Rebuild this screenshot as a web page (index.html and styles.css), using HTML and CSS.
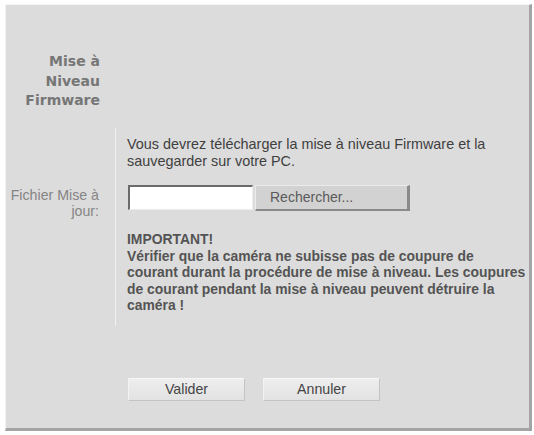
FILE: index.html
```html
<!DOCTYPE html>
<html lang="fr">
<head>
<meta charset="utf-8">
<title>Mise à Niveau Firmware</title>
<link rel="stylesheet" href="styles.css">
</head>
<body>
<div class="panel">
  <div class="header">
    <h1 class="title">Mise à<br>Niveau<br>Firmware</h1>
  </div>
  <div class="form">
    <div class="labels">
      <div class="label">Fichier Mise à<br>jour:</div>
    </div>
    <div class="content">
      <p class="intro">Vous devrez télécharger la mise à niveau Firmware et la<br>sauvegarder sur votre PC.</p>
      <div class="file-row">
        <span class="file-input"></span>
        <span class="browse">Rechercher...</span>
      </div>
      <p class="warning">IMPORTANT!<br>Vérifier que la caméra ne subisse pas de coupure de<br>courant durant la procédure de mise à niveau. Les coupures<br>de courant pendant la mise à niveau peuvent détruire la<br>caméra !</p>
    </div>
  </div>
  <div class="actions">
    <button class="btn">Valider</button>
    <button class="btn">Annuler</button>
  </div>
</div>
</body>
</html>
```

FILE: styles.css
```css
html, body {
  margin: 0;
  padding: 0;
  background: #ffffff;
}
body {
  font-family: "Liberation Sans", Arial, sans-serif;
}
.panel {
  margin: 4px 0 0 5px;
  width: 523px;
  height: 423px;
  box-sizing: content-box;
  background: #dcdcdc;
  border-top: 1px solid #f4f4f4;
  border-left: 1px solid #f2f2f2;
  border-right: 3px solid #a4a4a4;
  border-bottom: 3px solid #a4a4a4;
  display: flex;
  flex-direction: column;
  overflow: hidden;
}
.header {
  width: 94px;
  padding-top: 47px;
  height: 76px;
}
.title {
  margin: 0;
  text-align: right;
  font-family: "DejaVu Sans", Verdana, sans-serif;
  font-weight: bold;
  font-size: 14px;
  line-height: 19.5px;
  color: #767676;
}
.form {
  display: flex;
}
.labels {
  width: 93px;
  padding-right: 16px;
  padding-top: 59px;
}
.label {
  text-align: right;
  font-size: 14.2px;
  line-height: 16px;
  color: #858585;
  white-space: nowrap;
}
.content {
  border-left: 1px solid #f2f2f2;
  padding: 8px 0 12px 11px;
  color: #404040;
}
.intro {
  margin: 0;
  font-size: 14.4px;
  line-height: 17px;
  white-space: nowrap;
}
.file-row {
  display: flex;
  margin-top: 15px;
  height: 26px;
}
.file-input {
  width: 122px;
  height: 22px;
  margin-left: 1px;
  background: #ffffff;
  border-top: 2px solid #6a6a6a;
  border-left: 2px solid #6a6a6a;
  border-right: 1px solid #ececec;
  border-bottom: 1px solid #ececec;
}
.browse {
  margin-left: 2px;
  width: 137px;
  height: 23px;
  padding-left: 14px;
  background: #d2d2d2;
  border-top: 1px solid #ebebeb;
  border-left: 1px solid #ebebeb;
  border-right: 3px solid #8a8a8a;
  border-bottom: 2px solid #8a8a8a;
  font-size: 14px;
  line-height: 23px;
  color: #5a5a5a;
}
.warning {
  margin: 20px 0 0 0;
  font-size: 13.9px;
  font-weight: bold;
  line-height: 16.5px;
  color: #545454;
  white-space: nowrap;
}
.actions {
  display: flex;
  gap: 18px;
  padding-left: 122px;
  margin-top: 52px;
}
.btn {
  width: 117px;
  height: 23px;
  padding: 0;
  background: linear-gradient(#eeeeee, #e2e2e2);
  border: 1px solid #c4c4c4;
  border-top-color: #f6f6f6;
  border-left-color: #f2f2f2;
  font-family: "Liberation Sans", Arial, sans-serif;
  font-size: 14.2px;
  color: #454545;
}
```
